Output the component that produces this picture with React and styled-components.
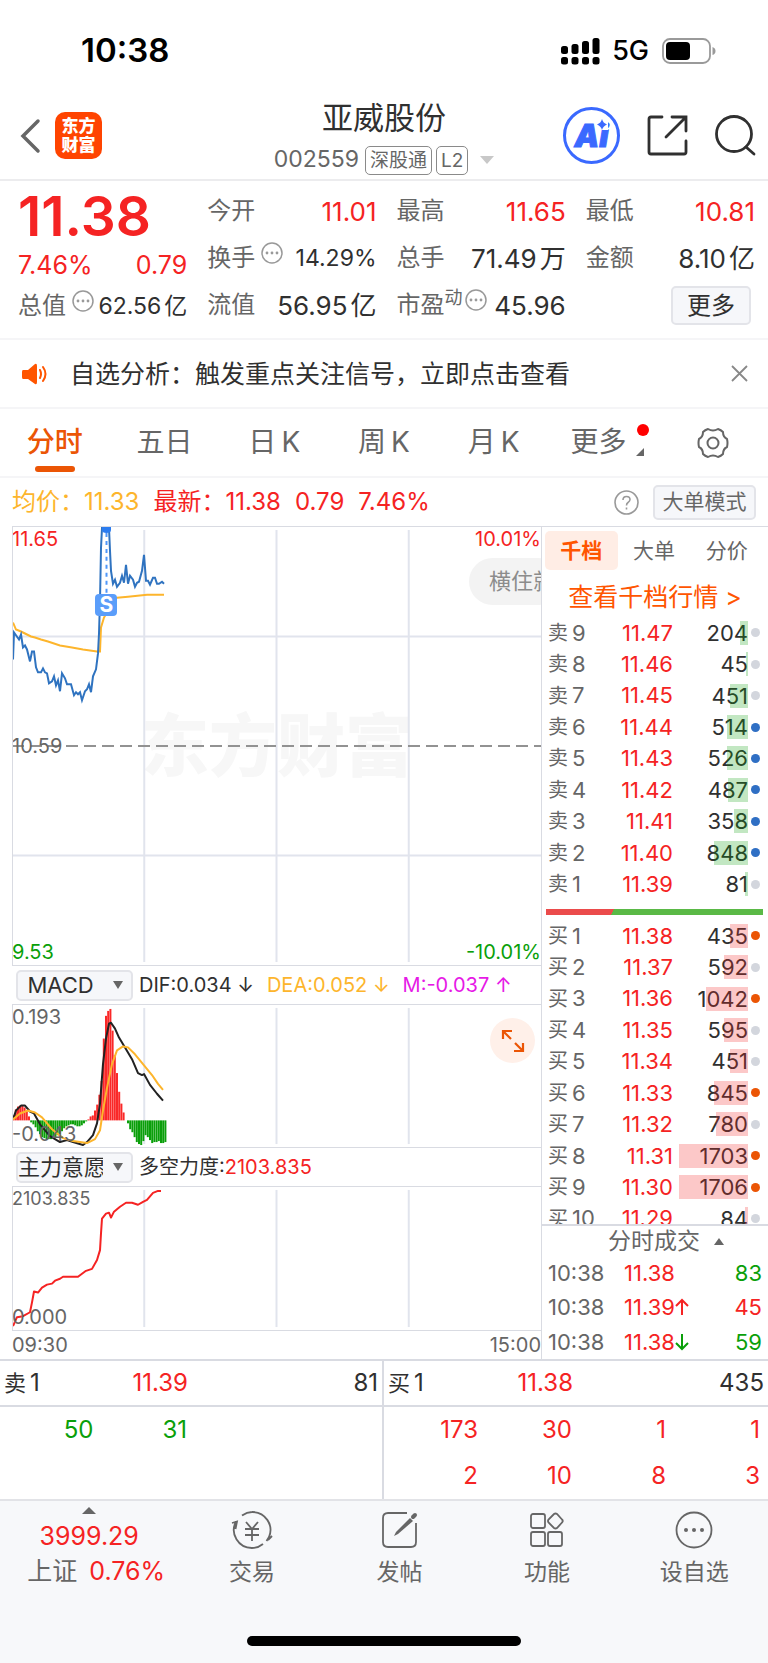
import React from 'react';
import styled, { createGlobalStyle } from 'styled-components';

const RED = '#f52323';
const GREEN = '#0a9f0a';
const ORANGE = '#eb5505';
const GREY = '#666666';
const DARK = '#303030';
const LINE = '#d9dbe2';
const GRID = '#e1e4ed';

const GlobalStyle = createGlobalStyle`
    * {
        box-sizing: border-box;
    }

    body {
        margin: 0;
        background: #ffffff;
        color: ${DARK};
        font-family: Inter, 'Noto Sans CJK SC', sans-serif;
        line-height: 1.2;
    }

    button, select {
        margin: 0;
        padding: 0;
        border: 0;
        background: none;
        color: inherit;
        font: inherit;
    }

    svg {
        display: block;
        flex: none;
    }
`;

/* Status bar */

const StatusBar = styled.div`
    display: flex;
    align-items: center;
    height: 100px;
    padding: 2px 52px 0 81px;
    color: #000000;

    .time {
        flex: 1;
        font-size: 33px;
        font-weight: 600;
    }

    .network {
        margin: 0 13px 0 12px;
        font-size: 27px;
        font-weight: 500;
    }
`;

/* Header */

const Header = styled.header`
    display: grid;
    grid-template-columns: 1fr auto 1fr;
    align-items: center;
    height: 81px;
    padding: 0 12px;
    border-bottom: 2px solid #ececee;
`;

const HeaderSide = styled.div`
    display: flex;
    align-items: center;
    justify-content: ${({ $end }) => ($end ? 'flex-end' : 'flex-start')};
    gap: ${({ $end }) => ($end ? 27 : 14)}px;
    padding: 0 0 8px ${({ $end }) => ($end ? 0 : 8)}px;
`;

const Logo = styled.div`
    display: flex;
    align-items: center;
    justify-content: center;
    width: 47px;
    height: 47px;
    border-radius: 10px;
    background: #ff4400;
    color: #ffffff;
    font-size: 17px;
    font-weight: 900;
    line-height: 19px;
    text-align: center;
`;

const TitleBlock = styled.div`
    display: flex;
    flex-direction: column;
    align-items: center;
    gap: 5px;

    h1 {
        margin: 0;
        font-size: 31px;
        font-weight: 400;
        line-height: 36px;
    }

    .sub {
        display: flex;
        align-items: center;
        gap: 4px;
        height: 38px;
        color: ${GREY};
        font-size: 23px;
    }

    .code {
        margin-right: 2px;
    }

    svg {
        margin-left: 8px;
    }
`;

const Tag = styled.span`
    height: 29px;
    padding: 0 4px;
    border: 1px solid #8a8a8a;
    border-radius: 5px;
    font-size: 19px;
    line-height: 27px;
`;

const AiBadge = styled.button`
    position: relative;
    width: 57px;
    height: 57px;
    border: 3px solid #3a69ff;
    border-radius: 50%;
    color: #3a69ff;
    font-size: 31px;
    font-style: italic;
    font-weight: 900;
    line-height: 50px;
    -webkit-text-stroke: 1px #3a69ff;

    svg {
        position: absolute;
        top: 9px;
        right: 9px;
        background: #ffffff;
    }
`;

/* Quote summary */

const Quote = styled.section`
    display: grid;
    grid-template-columns: repeat(4, minmax(0, 1fr));
    column-gap: 20px;
    height: 159px;
    padding: 7px 13px 9px 18px;
    border-bottom: 2px solid #f5f5f7;
`;

const QuoteColumn = styled.div`
    display: flex;
    flex-direction: column;
`;

const LastPrice = styled.div`
    height: 59px;
    color: ${RED};
    font-size: 55px;
    font-weight: 600;
    line-height: 57px;
`;

const QuoteCell = styled.div`
    display: flex;
    align-items: center;
    justify-content: space-between;
    height: 47px;
    white-space: nowrap;
    font-size: ${({ $small }) => ($small ? 23 : 26)}px;
    color: ${({ $color }) => $color || DARK};

    .label {
        display: flex;
        align-items: center;
        color: ${GREY};
        font-size: 24px;
    }

    .unit {
        margin-left: 3px;
    }

    sup {
        margin-bottom: 16px;
        font-size: 18px;
        line-height: 18px;
    }

    svg {
        margin: 0 0 12px 6px;
    }

    sup + svg {
        margin-left: 2px;
    }
`;

const ChangeCell = styled(QuoteCell)`
    height: 36px;
    font-size: 25px;
`;

const MoreButton = styled.button`
    width: 80px;
    height: 39px;
    margin: 4px 4px 0 auto;
    border: 2px solid #e3e4e9;
    border-radius: 5px;
    background: #f6f7fa;
    font-size: 24px;
    line-height: 34px;
`;

/* Notice */

const Notice = styled.div`
    display: flex;
    align-items: center;
    height: 69px;
    padding: 0 20px 0 21px;
    border-bottom: 2px solid #f5f5f7;
    font-size: 25px;

    .message {
        flex: 1;
        margin-left: 21px;
    }
`;

/* Period tabs */

const PeriodTabs = styled.nav`
    display: grid;
    grid-template-columns: repeat(7, 1fr);
    height: 69px;
    border-bottom: 2px solid #f5f5f7;
`;

const PeriodTab = styled.button`
    position: relative;
    display: flex;
    align-items: center;
    justify-content: center;
    gap: 5px;
    color: ${({ $active }) => ($active ? ORANGE : GREY)};
    font-size: 28px;
    font-weight: ${({ $active }) => ($active ? 500 : 400)};

    &::after {
        content: '';
        display: ${({ $active }) => ($active ? 'block' : 'none')};
        position: absolute;
        bottom: 4px;
        left: calc(50% - 20px);
        width: 40px;
        height: 6px;
        border-radius: 3px;
        background: ${ORANGE};
    }
`;

const MoreTab = styled(PeriodTab)`
    gap: 10px;
    padding-left: 8px;

    svg {
        align-self: flex-end;
        margin-bottom: 20px;
    }

    .dot {
        position: absolute;
        top: 15px;
        right: 9px;
        width: 12px;
        height: 12px;
        border-radius: 50%;
        background: #ff0000;
    }
`;

/* Price info line */

const InfoLine = styled.div`
    display: flex;
    align-items: center;
    gap: 14px;
    height: 48px;
    padding: 0 12px;
    color: ${RED};
    font-size: 24px;

    .average {
        color: #fdb52c;
    }

    .help {
        margin-left: auto;
    }
`;

const ModeButton = styled.button`
    width: 103px;
    height: 35px;
    border: 2px solid #e3e4e9;
    border-radius: 5px;
    background: #f6f7fa;
    color: ${GREY};
    font-size: 21px;
    line-height: 30px;
`;

/* Charts */

const Main = styled.main`
    display: grid;
    grid-template-columns: minmax(0, 1fr) 227px;
    height: 835px;
    border-bottom: 2px solid ${LINE};
`;

const Charts = styled.section`
    display: flex;
    flex-direction: column;
    padding-left: 12px;
    color: ${GREY};
    font-size: 20px;
`;

const Plot = styled.div`
    position: relative;
    height: ${({ $height }) => $height}px;
    overflow: hidden;
    border: solid ${LINE};
    border-width: 1px 0 1px 1px;

    > svg {
        position: absolute;
        left: -1px;
        width: calc(100% + 1px);
        height: 100%;
    }
`;

const AxisLabel = styled.span`
    position: absolute;
    ${({ $bottom }) => ($bottom ? 'bottom: 2px' : 'top: 1px')};
    ${({ $right }) => ($right ? 'right: 0' : 'left: -1px')};
    color: ${({ $color }) => $color || GREY};
    font-size: ${({ $small }) => ($small ? 18 : 20)}px;
    line-height: 22px;
`;

const MiddleLabel = styled(AxisLabel)`
    top: calc(50% - 11px);
`;

const Watermark = styled.div`
    position: absolute;
    top: 50%;
    left: 50%;
    transform: translate(-50%, -50%);
    color: #f7f7f7;
    font-size: 68px;
    font-weight: 900;
    line-height: 80px;
    white-space: nowrap;
`;

const SellMark = styled.div`
    position: absolute;
    top: 67px;
    left: 17.7%;
    width: 22px;
    height: 22px;
    margin-left: -11px;
    border-radius: 4px;
    background: #5a9dfa;
    color: #ffffff;
    font-size: 21px;
    font-weight: 700;
    line-height: 22px;
    text-align: center;
`;

const RotateTip = styled.button`
    position: absolute;
    top: 31px;
    right: -20px;
    width: 92px;
    height: 47px;
    padding-left: 20px;
    border-radius: 24px;
    background: #f3f3f3;
    color: #8c8c8c;
    font-size: 22px;
    text-align: left;
    white-space: nowrap;
`;

const ExpandButton = styled.button`
    position: absolute;
    top: 13px;
    right: 6px;
    display: flex;
    align-items: center;
    justify-content: center;
    width: 45px;
    height: 45px;
    border-radius: 50%;
    background: #fff0e9;
`;

const IndicatorBar = styled.div`
    display: flex;
    align-items: center;
    gap: 13px;
    height: 38px;
    padding-left: 4px;
    white-space: nowrap;
    color: ${DARK};

    .picker {
        display: flex;
        align-items: center;
        margin-right: 3px;
    }

    .picker svg {
        margin-left: -20px;
        pointer-events: none;
    }
`;

const IndicatorSelect = styled.select`
    width: 117px;
    height: 31px;
    padding-right: 28px;
    border: 2px solid #e3e4e9;
    border-radius: 5px;
    background: #f6f7fa;
    appearance: none;
    font-size: 22px;
    line-height: 27px;
    text-align: center;
    text-align-last: center;
`;

const Tinted = styled.span`
    color: ${({ $color }) => $color};
`;

const TimeAxis = styled.div`
    display: flex;
    flex: 1;
    align-items: center;
    justify-content: space-between;
`;

/* Order book */

const Book = styled.aside`
    display: flex;
    flex-direction: column;
    border-top: 1px solid ${LINE};
    border-left: 1px solid ${LINE};
    font-size: 22px;
`;

const BookTabs = styled.div`
    display: grid;
    grid-template-columns: repeat(3, 1fr);
    height: 39px;
    margin: 4px 5px 0 3px;
`;

const BookTab = styled.button`
    border-radius: 5px;
    background: ${({ $active }) => ($active ? '#ffede5' : 'transparent')};
    color: ${({ $active }) => ($active ? '#ff5500' : GREY)};
    font-size: 21px;
    font-weight: ${({ $active }) => ($active ? 700 : 400)};
`;

const BookLink = styled.a`
    height: 47px;
    padding-top: 7px;
    color: #ff5500;
    font-size: 25px;
    line-height: 40px;
    text-align: center;
    text-decoration: none;
`;

const Levels = styled.div`
    display: flex;
    flex-direction: column;
    height: 283px;
    padding: 0 8px 0 6px;
`;

const BuyLevels = styled(Levels)`
    height: 304px;
    overflow: hidden;
`;

const Level = styled.div`
    display: grid;
    grid-template-columns: 65px 60px 1fr 12px;
    flex: 0 0 calc(283px / 9);
    align-items: center;

    .name {
        display: flex;
        align-items: center;
        gap: 4px;
        color: ${GREY};
    }

    .side {
        font-size: 20px;
    }

    .price {
        color: ${RED};
        text-align: right;
    }

    .dot {
        justify-self: end;
        width: 9px;
        height: 9px;
        border-radius: 50%;
        background: ${({ $dot }) => $dot};
    }
`;

const Volume = styled.div`
    position: relative;
    height: 24px;
    line-height: 24px;
    text-align: right;

    i {
        position: absolute;
        top: 0;
        right: 0;
        height: 24px;
        background: ${({ $buy }) => ($buy ? 'rgba(245, 35, 35, 0.25)' : 'rgba(10, 159, 10, 0.25)')};
    }
`;

const Ratio = styled.div`
    height: 6px;
    margin: 9px 5px 5px 4px;
    background: linear-gradient(120deg, #eb4b4b 31%, #5ab946 31%);
`;

const TicksTitle = styled.button`
    display: flex;
    align-items: center;
    justify-content: center;
    gap: 14px;
    height: 32px;
    padding-left: 22px;
    border-top: 2px solid ${LINE};
    color: ${GREY};
    font-size: 23px;
    line-height: 30px;
`;

const Tick = styled.div`
    display: grid;
    grid-template-columns: 76px 1fr auto;
    flex: 1;
    align-items: center;
    padding: 0 6px;
    color: ${RED};

    .time {
        color: ${GREY};
    }

    .price {
        display: flex;
        align-items: center;
    }
`;

/* Level 2 queues */

const Queues = styled.section`
    display: grid;
    grid-template-columns: repeat(2, 1fr);
    font-size: 24px;
`;

const Queue = styled.div`
    border-right: ${({ $buy }) => ($buy ? 0 : 2)}px solid ${LINE};
    color: ${({ $buy }) => ($buy ? RED : GREEN)};
`;

const QueueHead = styled.div`
    display: grid;
    grid-template-columns: repeat(2, 1fr) 2fr;
    align-items: center;
    height: 46px;
    padding: 0 4px;
    border-bottom: 2px solid ${LINE};
    color: ${DARK};

    .name {
        display: flex;
        align-items: center;
        gap: 4px;
    }

    .side {
        font-size: 22px;
    }

    .price {
        padding-right: 3px;
        color: ${RED};
        text-align: right;
    }

    .volume {
        text-align: right;
    }
`;

const QueueGrid = styled.div`
    display: grid;
    grid-template-columns: repeat(4, 1fr);
    grid-auto-rows: 46px;
    align-items: center;
    height: 92px;
    padding-right: 8px;
    text-align: right;
`;

/* Bottom bar */

const BottomBar = styled.footer`
    height: 164px;
    border-top: 2px solid #e2e3e7;
    background: #f7f8fa;

    nav {
        display: grid;
        grid-template-columns: 23fr repeat(4, 19fr);
        height: 135px;
    }

    .home {
        width: 274px;
        height: 10px;
        margin: 0 auto;
        border-radius: 5px;
        background: #000000;
    }
`;

const IndexButton = styled.button`
    display: flex;
    flex-direction: column;
    align-items: center;
    padding-top: 6px;
    color: ${RED};
    font-size: 25px;
    line-height: 35px;

    .value {
        margin-top: 5px;
    }

    .change {
        padding-left: 14px;
    }

    .name {
        margin-right: 12px;
        color: ${GREY};
    }
`;

const NavButton = styled.button`
    display: flex;
    flex-direction: column;
    align-items: center;
    padding-top: 10px;
    color: ${GREY};
    font-size: 23px;
    line-height: 34px;

    svg {
        margin-bottom: 6px;
    }
`;

const avgLine =
    '1,96 4,103 9,105 15,108 19,110 23,111 29,113 36,115 48,119 60,121 71,123 85,125 88,125 89,101 92,91 96,84 99,74 105,71 116,70 135,68 152,68';

const priceLine =
    '1,133 2,106 7,113 9,108 11,121 13,119 15,123 18,135 20,125 22,125 24,141 26,146 29,146 31,142 33,146 35,147 37,157 40,155 42,150 44,159 46,154 48,165 50,147 53,152 55,158 59,158 62,169 64,166 66,168 68,166 70,174 73,165 75,163 77,158 79,166 81,150 84,143 86,127 87,107 88,74 89,21 90,1 97,1 98,24 99,44 101,57 103,53 105,60 108,56 110,49 112,56 114,38 116,57 118,49 121,53 123,60 125,56 127,55 130,44 132,28 134,54 136,54 138,58 141,51 143,51 145,57 147,57 150,55 152,57';

const difLine =
    '1,116 4,107 9,102 13,102 18,108 22,110 28,121 38,133 48,139 55,137 61,139 71,142 75,139 81,132 85,120 88,100 91,60 94,34 97,19 99,18 103,24 107,33 113,43 120,55 126,69 130,71 132,70 138,81 145,90 151,97';

const deaLine =
    '1,116 8,110 16,107 23,109 30,114 40,126 51,135 61,138 75,140 83,136 88,127 91,107 95,84 100,60 105,46 111,42 116,43 123,50 131,60 140,71 146,80 151,86';

const forceLine =
    '1,141 5,132 11,131 18,127 20,117 22,106 26,107 30,102 35,99 40,98 43,95 48,93 51,91 66,91 74,85 80,83 85,74 88,64 89,47 90,32 94,27 97,26 99,31 102,25 108,20 114,16 120,16 126,18 131,15 135,13 141,6 146,4 149,4';

const macdBars = [
    5, 11, 14, 15, 15, 13, 9, 4, -2, -4, -7, -11, -14, -17, -18, -19, -19, -19,
    -18, -17, -15, -14, -11, -8, -6, -5, -4, -4, -5, -6, -6, -5, -3, -1, 1, 4,
    5, 10, 16, 26, 40, 83, 106, 111, 113, 91, 66, 48, 29, 17, 8, 0, -3, -9, -12,
    -17, -22, -24, -25, -21, -15, -17, -20, -23, -22, -22, -21, -23, -23, -22,
];

const BLUE_DOT = '#2f6fc4';
const GREY_DOT = '#d3d6dd';

const sells = [
    ['9', '11.47', 204, GREY_DOT],
    ['8', '11.46', 45, GREY_DOT],
    ['7', '11.45', 451, GREY_DOT],
    ['6', '11.44', 514, BLUE_DOT],
    ['5', '11.43', 526, BLUE_DOT],
    ['4', '11.42', 487, BLUE_DOT],
    ['3', '11.41', 358, BLUE_DOT],
    ['2', '11.40', 848, BLUE_DOT],
    ['1', '11.39', 81, GREY_DOT],
];

const buys = [
    ['1', '11.38', 435, ORANGE],
    ['2', '11.37', 592, GREY_DOT],
    ['3', '11.36', 1042, ORANGE],
    ['4', '11.35', 595, GREY_DOT],
    ['5', '11.34', 451, GREY_DOT],
    ['6', '11.33', 845, ORANGE],
    ['7', '11.32', 780, GREY_DOT],
    ['8', '11.31', 1703, ORANGE],
    ['9', '11.30', 1706, ORANGE],
    ['10', '11.29', 84, GREY_DOT],
];

function Triangle({ width = 10, height = 8, up, color = GREY }) {
    return (
        <svg width={width} height={height} viewBox='0 0 10 8' preserveAspectRatio='none'>
            <path d={up ? 'M0 8L5 0L10 8Z' : 'M0 0L10 0L5 8Z'} fill={color} />
        </svg>
    );
}

function Arrow({ up, color }) {
    return (
        <svg width='14' height='18' viewBox='0 0 14 18' fill='none' stroke={color} strokeWidth='2'>
            <path d={up ? 'M7 17V2M1 8L7 2L13 8' : 'M7 1V16M1 10L7 16L13 10'} />
        </svg>
    );
}

function InfoDots() {
    return (
        <svg width='22' height='22' viewBox='0 0 22 22'>
            <circle cx='11' cy='11' r='10' fill='none' stroke='#999999' strokeWidth='1.5' />
            <g fill='#999999'>
                <circle cx='6' cy='11' r='1.4' />
                <circle cx='11' cy='11' r='1.4' />
                <circle cx='16' cy='11' r='1.4' />
            </g>
        </svg>
    );
}

function SignalIcon() {
    const tops = [9, 7, 4, 1];

    return (
        <svg width='39' height='28' viewBox='0 0 39 28'>
            {tops.map((top, i) => (
                <g key={top}>
                    <rect x={i * 10.5} y={top} width='7' height={17 - top} rx='2.5' />
                    <rect x={i * 10.5} y='20' width='7' height='7.5' rx='2.5' />
                </g>
            ))}
        </svg>
    );
}

function BatteryIcon() {
    return (
        <svg width='54' height='26' viewBox='0 0 54 26'>
            <rect x='1' y='1' width='47' height='24' rx='7' fill='none' stroke='#9a9a9a' strokeWidth='1.8' />
            <rect x='4' y='4' width='24' height='18' rx='4' />
            <path d='M50.500 9Q53.500 10 53.500 13Q53.500 16 50.500 17Z' fill='#9a9a9a' />
        </svg>
    );
}

function GridLines({ height, rows }) {
    return (
        <g stroke={GRID} strokeWidth='2'>
            {[132.250, 264.500, 396.750].map((x) => (
                <path key={x} d={`M${x} 3V${height - 3}`} />
            ))}
            {rows && <path d={`M0 ${height / 4}H529M0 ${(height * 3) / 4}H529`} />}
        </g>
    );
}

function PricePlot() {
    return (
        <Plot $height={440}>
            <Watermark>东方财富</Watermark>
            <svg viewBox='0 0 529 440' preserveAspectRatio='none' fill='none'>
                <GridLines height={440} rows />
                <path d='M0 220H529' stroke='#929292' strokeWidth='2' strokeDasharray='12 6' />
                <polyline points={avgLine} stroke='#fdb52c' strokeWidth='2' />
                <polyline points={priceLine} stroke='#2f73c0' strokeWidth='2' />
                <path d='M94.500 6V68' stroke='#4f97fa' strokeWidth='2' strokeDasharray='4 4' />
                <path d='M90 0H99V3Q99 6 94.500 6Q90 6 90 3Z' fill='#2b7cf0' />
            </svg>
            <SellMark>S</SellMark>
            <AxisLabel $color={RED}>11.65</AxisLabel>
            <AxisLabel $color={RED} $right>10.01%</AxisLabel>
            <MiddleLabel>10.59</MiddleLabel>
            <AxisLabel $color={GREEN} $bottom>9.53</AxisLabel>
            <AxisLabel $color={GREEN} $bottom $right>-10.01%</AxisLabel>
            <RotateTip>横住就</RotateTip>
        </Plot>
    );
}

function MacdPlot() {
    return (
        <Plot $height={144}>
            <svg viewBox='0 0 529 144' preserveAspectRatio='none' fill='none'>
                <GridLines height={144} />
                {macdBars.map((v, i) => (
                    <rect
                        key={i}
                        x={0.6 + i * 2.2}
                        y={v > 0 ? 117 - v : 117}
                        width='2'
                        height={Math.abs(v)}
                        fill={v > 0 ? '#fa2828' : '#0a9f0a'}
                    />
                ))}
                <polyline points={difLine} stroke='#222222' strokeWidth='2' strokeLinejoin='round' />
                <polyline points={deaLine} stroke='#fdb52c' strokeWidth='2' strokeLinejoin='round' />
            </svg>
            <AxisLabel>0.193</AxisLabel>
            <AxisLabel $bottom>-0.043</AxisLabel>
            <ExpandButton aria-label='expand'>
                <svg width='24' height='24' viewBox='0 0 24 24' fill='none' stroke={ORANGE} strokeWidth='2.2'>
                    <path d='M2 10V2H11M2 2L10 10M22 14V22H13M22 22L14 14' />
                </svg>
            </ExpandButton>
        </Plot>
    );
}

function ForcePlot() {
    return (
        <Plot $height={145}>
            <svg viewBox='0 0 529 145' preserveAspectRatio='none' fill='none'>
                <GridLines height={145} />
                <polyline points={forceLine} stroke={RED} strokeWidth='2' strokeLinejoin='round' />
            </svg>
            <AxisLabel $small>2103.835</AxisLabel>
            <AxisLabel $bottom>0.000</AxisLabel>
        </Plot>
    );
}

function IndicatorPicker({ label, value }) {
    return (
        <div className='picker'>
            <IndicatorSelect aria-label={label} defaultValue={value}>
                <option>{value}</option>
            </IndicatorSelect>
            <Triangle />
        </div>
    );
}

function BookLevel({ side, level }) {
    const [name, price, volume, dot] = level;

    return (
        <Level $dot={dot}>
            <span className='name'><span className='side'>{side}</span>{name}</span>
            <span className='price'>{price}</span>
            <Volume $buy={side === '买'}>
                {volume}
                <i style={{ width: Math.max(1, Math.round((volume / 1706) * 69)) }} />
            </Volume>
            <span className='dot' />
        </Level>
    );
}

function QuoteHeader() {
    return (
        <Quote>
            <QuoteColumn>
                <LastPrice>11.38</LastPrice>
                <ChangeCell $color={RED}>
                    <span>7.46%</span>
                    <span>0.79</span>
                </ChangeCell>
                <QuoteCell $small>
                    <span className='label'>总值<InfoDots /></span>
                    <span>62.56<span className='unit'>亿</span></span>
                </QuoteCell>
            </QuoteColumn>
            <QuoteColumn>
                <QuoteCell $color={RED}><span className='label'>今开</span>11.01</QuoteCell>
                <QuoteCell $small><span className='label'>换手<InfoDots /></span>14.29%</QuoteCell>
                <QuoteCell>
                    <span className='label'>流值</span>
                    <span>56.95<span className='unit'>亿</span></span>
                </QuoteCell>
            </QuoteColumn>
            <QuoteColumn>
                <QuoteCell $color={RED}><span className='label'>最高</span>11.65</QuoteCell>
                <QuoteCell>
                    <span className='label'>总手</span>
                    <span>71.49<span className='unit'>万</span></span>
                </QuoteCell>
                <QuoteCell>
                    <span className='label'>市盈<sup>动</sup><InfoDots /></span>
                    45.96
                </QuoteCell>
            </QuoteColumn>
            <QuoteColumn>
                <QuoteCell $color={RED}><span className='label'>最低</span>10.81</QuoteCell>
                <QuoteCell>
                    <span className='label'>金额</span>
                    <span>8.10<span className='unit'>亿</span></span>
                </QuoteCell>
                <MoreButton>更多</MoreButton>
            </QuoteColumn>
        </Quote>
    );
}

function OrderBook() {
    return (
        <Book>
            <BookTabs>
                <BookTab $active>千档</BookTab>
                <BookTab>大单</BookTab>
                <BookTab>分价</BookTab>
            </BookTabs>
            <BookLink href='#levels'>查看千档行情 &gt;</BookLink>
            <Levels id='levels'>
                {sells.map((level) => <BookLevel key={level[0]} side='卖' level={level} />)}
            </Levels>
            <Ratio />
            <BuyLevels>
                {buys.map((level) => <BookLevel key={level[0]} side='买' level={level} />)}
            </BuyLevels>
            <TicksTitle>
                分时成交
                <Triangle up width={10} height={7} />
            </TicksTitle>
            <Tick>
                <span className='time'>10:38</span>
                <span className='price'>11.38</span>
                <Tinted $color={GREEN}>83</Tinted>
            </Tick>
            <Tick>
                <span className='time'>10:38</span>
                <span className='price'>11.39<Arrow up color={RED} /></span>
                <span>45</span>
            </Tick>
            <Tick>
                <span className='time'>10:38</span>
                <span className='price'>11.38<Arrow color={GREEN} /></span>
                <Tinted $color={GREEN}>59</Tinted>
            </Tick>
        </Book>
    );
}

function TradeIcon() {
    return (
        <svg width='42' height='38' viewBox='0 0 42 38' fill='none' stroke={GREY} strokeWidth='1.8'>
            <path d='M11 4.500Q16 1 21 1A18 18 0 0 1 38 26L35.500 30M37 29L41 25' />
            <path d='M32 33Q27 37 21 37A18 18 0 0 1 5 10.500M1 12L6 10.500L4.500 18' />
            <path d='M15 11L21 18L27 11M14 18H28M14 24H28M21 18V30' />
        </svg>
    );
}

function PostIcon() {
    return (
        <svg width='36' height='38' viewBox='0 0 36 38' fill='none' stroke={GREY} strokeWidth='1.8'>
            <path d='M25 2H6Q1 2 1 7V31Q1 36 6 36H29Q34 36 34 31V12' />
            <path d='M28 7L31 10L16 23L12 25L14 21Z' fill={GREY} stroke='none' />
            <path d='M31 6L33 4' strokeWidth='4' strokeLinecap='round' />
        </svg>
    );
}

function AppsIcon() {
    return (
        <svg width='34' height='38' viewBox='0 0 34 38' fill='none' stroke={GREY} strokeWidth='1.8'>
            <rect x='1' y='3' width='14' height='14' rx='2' />
            <rect x='1' y='21' width='14' height='14' rx='2' />
            <rect x='18' y='21' width='14' height='14' rx='2' />
            <path d='M24 3Q25.500 2 27 3L32 8.500Q33.500 10 32 11.500L27 17Q25.500 18 24 17L18.500 11.500Q17.500 10 18.500 8.500Z' />
        </svg>
    );
}

function MoreIcon() {
    return (
        <svg width='38' height='38' viewBox='0 0 38 38'>
            <circle cx='19' cy='19' r='17.5' fill='none' stroke={GREY} strokeWidth='1.8' />
            <g fill={GREY}>
                <circle cx='11' cy='19' r='2' />
                <circle cx='19' cy='19' r='2' />
                <circle cx='27' cy='19' r='2' />
            </g>
        </svg>
    );
}

export default function App() {
    return (
        <>
            <GlobalStyle />
            <StatusBar>
                <span className='time'>10:38</span>
                <SignalIcon />
                <span className='network'>5G</span>
                <BatteryIcon />
            </StatusBar>

            <Header>
                <HeaderSide>
                    <button aria-label='back'>
                        <svg width='21' height='36' viewBox='0 0 21 36' fill='none' stroke={GREY} strokeWidth='3.5' strokeLinecap='round'>
                            <path d='M18 3L3 18L18 33' />
                        </svg>
                    </button>
                    <Logo>东方<br />财富</Logo>
                </HeaderSide>
                <TitleBlock>
                    <h1>亚威股份</h1>
                    <div className='sub'>
                        <span className='code'>002559</span>
                        <Tag>深股通</Tag>
                        <Tag>L2</Tag>
                        <Triangle width={14} height={8} color='#c8c8c8' />
                    </div>
                </TitleBlock>
                <HeaderSide $end>
                    <AiBadge>
                        Ai
                        <svg width='12' height='11' viewBox='0 0 12 11'>
                            <path d='M6 0Q7 4 11 5.500Q7 7 6 11Q5 7 1 5.500Q5 4 6 0Z' fill='#3a69ff' />
                        </svg>
                    </AiBadge>
                    <button aria-label='share'>
                        <svg width='41' height='41' viewBox='0 0 41 41' fill='none' stroke={DARK} strokeWidth='2.8' strokeLinecap='round'>
                            <path d='M15 2H4Q2 2 2 4V37Q2 39 4 39H37Q39 39 39 37V26' />
                            <path d='M25 2H39V16M38 3L19 22' />
                        </svg>
                    </button>
                    <button aria-label='search'>
                        <svg width='41' height='41' viewBox='0 0 41 41' fill='none' stroke={DARK} strokeWidth='2.8' strokeLinecap='round'>
                            <circle cx='19' cy='19' r='17.5' />
                            <path d='M31 32L39 39' />
                        </svg>
                    </button>
                </HeaderSide>
            </Header>

            <QuoteHeader />

            <Notice>
                <svg width='28' height='22' viewBox='0 0 28 22' fill='none' stroke='#ff5500' strokeWidth='2'>
                    <path d='M2 7H7L14 1Q16 0 16 3V19Q16 22 14 21L7 16H2Q1 16 1 14V9Q1 7 2 7Z' fill='#ff5500' stroke='none' />
                    <path d='M19 7Q21 11 19 15M22 4Q27 11 22 18' strokeLinecap='round' />
                </svg>
                <span className='message'>自选分析：触发重点关注信号，立即点击查看</span>
                <button aria-label='close'>
                    <svg width='17' height='17' viewBox='0 0 17 17' stroke='#888888' strokeWidth='1.8'>
                        <path d='M1 1L16 16M16 1L1 16' />
                    </svg>
                </button>
            </Notice>

            <PeriodTabs>
                <PeriodTab $active>分时</PeriodTab>
                <PeriodTab>五日</PeriodTab>
                <PeriodTab><span>日</span><span>K</span></PeriodTab>
                <PeriodTab><span>周</span><span>K</span></PeriodTab>
                <PeriodTab><span>月</span><span>K</span></PeriodTab>
                <MoreTab>
                    更多
                    <svg width='8' height='8' viewBox='0 0 8 8'>
                        <path d='M8 0V8H0Z' fill={GREY} />
                    </svg>
                    <span className='dot' />
                </MoreTab>
                <PeriodTab aria-label='settings'>
                    <svg width='32' height='32' viewBox='0 0 32 32' fill='none' stroke={GREY} strokeWidth='2'>
                        <path d='M11 2Q16 5 21 2Q24 3 26 5Q26 10 30 12Q31 16 30 20Q26 22 26 27Q24 29 21 30Q16 27 11 30Q8 29 6 27Q6 22 2 20Q1 16 2 12Q6 10 6 5Q8 3 11 2Z' strokeLinejoin='round' />
                        <circle cx='16' cy='16' r='5.5' />
                    </svg>
                </PeriodTab>
            </PeriodTabs>

            <InfoLine>
                <span className='average'>均价：11.33</span>
                <span>最新：11.38</span>
                <span>0.79</span>
                <span>7.46%</span>
                <button className='help' aria-label='help'>
                    <svg width='25' height='25' viewBox='0 0 25 25' fill='none' stroke='#999999' strokeWidth='1.6'>
                        <circle cx='12.500' cy='12.500' r='11.500' />
                        <path d='M9 10Q9 6.500 12.500 6.500Q16 6.500 16 9.500Q16 11 14 12.500Q12.500 13.500 12.500 15.500M12.500 17.500V19.500' />
                    </svg>
                </button>
                <ModeButton>大单模式</ModeButton>
            </InfoLine>

            <Main>
                <Charts>
                    <PricePlot />
                    <IndicatorBar>
                        <IndicatorPicker label='indicator 1' value='MACD' />
                        <span>DIF:0.034 ↓</span>
                        <Tinted $color='#fdb52c'>DEA:0.052 ↓</Tinted>
                        <Tinted $color='#e619e6'>M:-0.037 ↑</Tinted>
                    </IndicatorBar>
                    <MacdPlot />
                    <IndicatorBar>
                        <IndicatorPicker label='indicator 2' value='主力意愿' />
                        <span>多空力度:<Tinted $color={RED}>2103.835</Tinted></span>
                    </IndicatorBar>
                    <ForcePlot />
                    <TimeAxis>
                        <span>09:30</span>
                        <span>15:00</span>
                    </TimeAxis>
                </Charts>
                <OrderBook />
            </Main>

            <Queues>
                <Queue>
                    <QueueHead>
                        <span className='name'><span className='side'>卖</span>1</span>
                        <span className='price'>11.39</span>
                        <span className='volume'>81</span>
                    </QueueHead>
                    <QueueGrid>
                        <span>50</span>
                        <span>31</span>
                    </QueueGrid>
                </Queue>
                <Queue $buy>
                    <QueueHead>
                        <span className='name'><span className='side'>买</span>1</span>
                        <span className='price'>11.38</span>
                        <span className='volume'>435</span>
                    </QueueHead>
                    <QueueGrid>
                        {[173, 30, 1, 1, 2, 10, 8, 3].map((lots, i) => <span key={i}>{lots}</span>)}
                    </QueueGrid>
                </Queue>
            </Queues>

            <BottomBar>
                <nav>
                    <IndexButton>
                        <Triangle up width={14} height={7} />
                        <span className='value'>3999.29</span>
                        <span className='change'><span className='name'>上证</span>0.76%</span>
                    </IndexButton>
                    <NavButton><TradeIcon />交易</NavButton>
                    <NavButton><PostIcon />发帖</NavButton>
                    <NavButton><AppsIcon />功能</NavButton>
                    <NavButton><MoreIcon />设自选</NavButton>
                </nav>
                <div className='home' />
            </BottomBar>
        </>
    );
}
